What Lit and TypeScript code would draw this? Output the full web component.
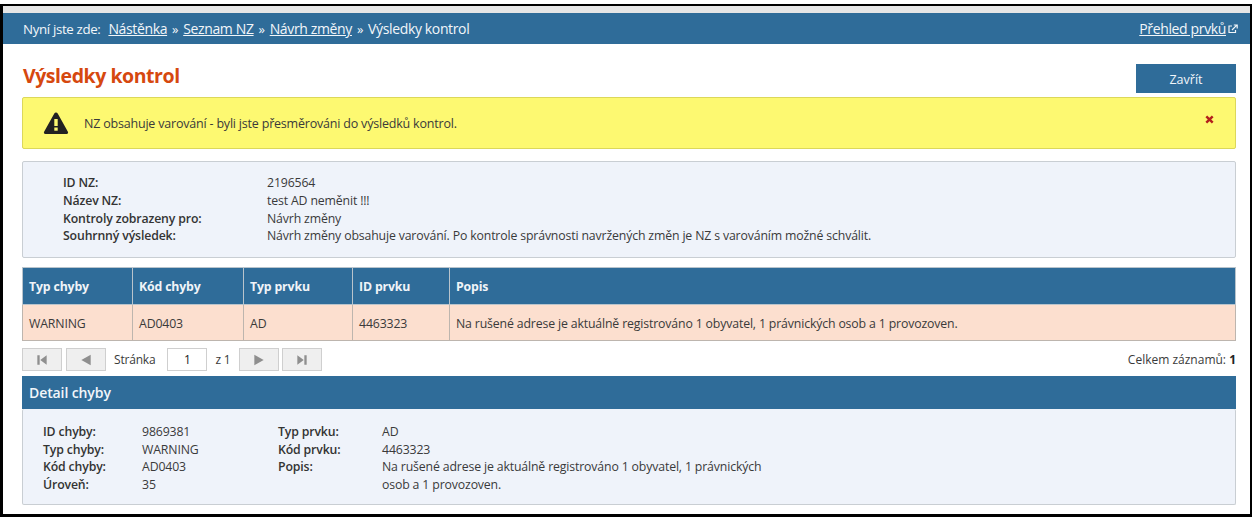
import { LitElement, html, css, svg } from "lit";
import { customElement } from "lit/decorators.js";

const tri = (d: string) => svg`<svg width="14" height="14" viewBox="0 0 12 12"><path d=${d} fill="#8f8f8f"/></svg>`;

@customElement("app-root")
export class AppRoot extends LitElement {
  static styles = css`
    :host { display: block; font-family: "Open Sans", "Noto Sans", sans-serif; font-size: 12px; color: #3a3a3a; background: #fff; height: 517px; overflow: hidden; }
    * { box-sizing: border-box; }
    .frame { margin-top: 4px; width: 1252px; height: 513px; border: 2px solid #000; border-left-width: 3px; border-bottom-width: 3px; background: #fff; }
    .strip { height: 7px; background: #e6e6e6; }
    .bar { height: 31px; background: #2f6c99; color: #f2f6f9; display: flex; align-items: center; justify-content: space-between; padding: 0 12px 0 20px; font-size: 14px; letter-spacing: -0.36px; }
    .bar a { color: #f2f6f9; text-decoration: underline; }
    .crumbs { display: flex; gap: 5px; align-items: center; }
    .crumbs .lead { margin-right: 3px; font-size: 13.3px; letter-spacing: -0.35px; }
    .sep { font-size: 13px; }
    .ext { display: flex; align-items: center; gap: 2px; }
    .content { padding: 0 14px 0 19px; }
    .head { display: flex; justify-content: space-between; height: 53px; }
    h1 { margin: 18px 0 0 1px; font-size: 19.5px; line-height: 28px; font-weight: 700; color: #d6480f; letter-spacing: -0.45px; }
    .close { margin-top: 20px; width: 100px; height: 29px; padding-top: 1px; background: #2f6c99; color: #f2f6f9; display: flex; align-items: center; justify-content: center; font-size: 12.5px; }
    .alert { height: 52px; background: #fdf971; border: 1px solid #dcd85a; border-radius: 2px; display: flex; align-items: center; padding: 0 21px 0 20px; font-size: 12.5px; letter-spacing: -0.2px; }
    .alert .msg { margin-left: 15px; flex: 1; }
    .alert .x { margin-bottom: 7px; }
    .panel { background: #eff3fa; border: 1px solid #c9ced3; border-radius: 2px; }
    .info { margin-top: 12px; height: 97px; padding: 12px 40px; display: grid; grid-template-columns: 204px 1fr; grid-auto-rows: 17.7px; align-items: center; font-size: 12.3px; letter-spacing: -0.15px; }
    .k { font-weight: 600; color: #333; }
    table { margin-top: 9px; width: 100%; border-collapse: collapse; table-layout: fixed; font-size: 12.3px; }
    th { height: 37px; background: #2f6c99; color: #f0f4f8; text-align: left; font-weight: 700; padding: 0 5px 0 6px; border: 1px solid #b9c4cc; letter-spacing: -0.15px; }
    td { height: 36px; padding: 1px 5px 0 6px; background: #fcdfcf; border: 1px solid #bdb5ae; letter-spacing: -0.15px; }
    .pager { margin-top: 7px; height: 23px; display: flex; align-items: center; font-size: 12px; letter-spacing: -0.2px; }
    .pb { width: 40px; height: 23px; background: #efefef; border: 1px solid #cfcfcf; display: flex; align-items: center; justify-content: center; margin-right: 4px; }
    .pb.last { margin-right: 0; }
    .pb.tight { margin-right: 3px; }
    .pl { margin: 0 12px 0 4px; }
    .pi { width: 40px; height: 23px; background: #fff; border: 1px solid #cfcfcf; display: flex; align-items: center; justify-content: center; color: #222; }
    .pz { margin: 0 9px 0 8px; }
    .total { margin-left: auto; font-size: 12px; letter-spacing: 0; }
    .total b { color: #222; }
    .dh { margin-top: 5px; height: 33px; background: #2f6c99; color: #f2f6f9; font-size: 14px; font-weight: 600; display: flex; align-items: center; padding: 0 7px; letter-spacing: -0.1px; }
    .detail { height: 96px; padding: 14px 20px 12px; border-top: none; display: grid; grid-template-columns: 99px 136px 104px 400px; grid-auto-rows: 17.6px; align-items: center; font-size: 12.3px; letter-spacing: -0.15px; }
    .wrap { grid-row: span 2; align-self: start; line-height: 17.6px; }
  `;

  render() {
    return html`<div class="frame">
      <div class="strip"></div>
      <div class="bar">
        <div class="crumbs">
          <span class="lead">Nyní jste zde:</span>
          <a>Nástěnka</a><span class="sep">»</span><a>Seznam NZ</a><span class="sep">»</span><a>Návrh změny</a><span class="sep">»</span><span>Výsledky kontrol</span>
        </div>
        <div class="ext"><a>Přehled prvků</a>
          <svg width="10" height="10" viewBox="0 0 10 10" fill="none" stroke="#f2f6f9" stroke-width="1.2"><path d="M7.500 6v2.500h-6.500v-6.500h3"/><path d="M4 6l4.600-4.600M5.800 1h3.400v3.400"/></svg>
        </div>
      </div>
      <div class="content">
        <div class="head"><h1>Výsledky kontrol</h1><div class="close">Zavřít</div></div>
        <div class="alert">
          <svg width="26" height="24" viewBox="0 0 26 24"><path d="M13 1.500c.8 0 1.300.4 1.700 1.100l10.200 18.200c.6 1.100 0 2.200-1.300 2.200H2.400c-1.300 0-1.900-1.100-1.300-2.200L11.300 2.600c.4-.7.900-1.100 1.700-1.100z" fill="#222"/><rect x="11.300" y="8" width="3.400" height="7" fill="#fdf971"/><rect x="11.300" y="16.500" width="3.400" height="3.200" fill="#fdf971"/></svg>
          <span class="msg">NZ obsahuje varování - byli jste přesměrováni do výsledků kontrol.</span>
          <svg class="x" width="9" height="9" viewBox="0 0 9 9"><path d="M1.300 1.300l6.400 6.400M7.700 1.300L1.300 7.700" stroke="#b3201c" stroke-width="2.400"/></svg>
        </div>
        <div class="panel info">
          <span class="k">ID NZ:</span><span>2196564</span>
          <span class="k">Název NZ:</span><span>test AD neměnit !!!</span>
          <span class="k">Kontroly zobrazeny pro:</span><span>Návrh změny</span>
          <span class="k">Souhrnný výsledek:</span><span>Návrh změny obsahuje varování. Po kontrole správnosti navržených změn je NZ s varováním možné schválit.</span>
        </div>
        <table>
          <colgroup><col style="width:110px"/><col style="width:111px"/><col style="width:109px"/><col style="width:97px"/><col/></colgroup>
          <tr><th>Typ chyby</th><th>Kód chyby</th><th>Typ prvku</th><th>ID prvku</th><th>Popis</th></tr>
          <tr><td>WARNING</td><td>AD0403</td><td>AD</td><td>4463323</td><td>Na rušené adrese je aktuálně registrováno 1 obyvatel, 1 právnických osob a 1 provozoven.</td></tr>
        </table>
        <div class="pager">
          <div class="pb">${tri("M2 2h2v8h-2zM10 2v8L4.500 6z")}</div>
          <div class="pb">${tri("M10 1.500v9L2 6z")}</div>
          <span class="pl">Stránka</span>
          <div class="pi">1</div>
          <span class="pz">z 1</span>
          <div class="pb tight">${tri("M2 1.500v9L10 6z")}</div>
          <div class="pb last">${tri("M10 2h-2v8h2zM2 2v8l5.500-4z")}</div>
          <span class="total">Celkem záznamů: <b>1</b></span>
        </div>
        <div class="dh">Detail chyby</div>
        <div class="panel detail">
          <span class="k">ID chyby:</span><span>9869381</span><span class="k">Typ prvku:</span><span>AD</span>
          <span class="k">Typ chyby:</span><span>WARNING</span><span class="k">Kód prvku:</span><span>4463323</span>
          <span class="k">Kód chyby:</span><span>AD0403</span><span class="k">Popis:</span><span class="wrap">Na rušené adrese je aktuálně registrováno 1 obyvatel, 1 právnických<br/>osob a 1 provozoven.</span>
          <span class="k">Úroveň:</span><span>35</span>
        </div>
      </div>
    </div>`;
  }
}
